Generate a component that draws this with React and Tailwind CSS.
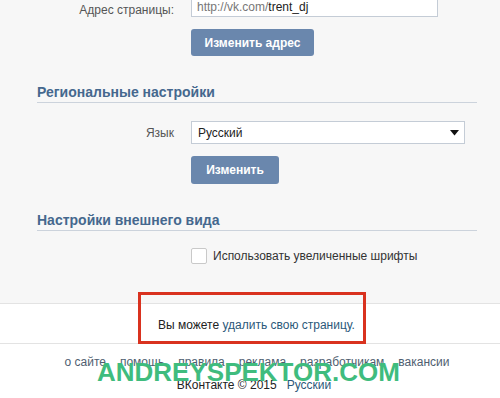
import React from "react";

export default function App() {
  const links = ["о сайте", "помощь", "правила", "реклама", "разработчикам", "вакансии"];
  return (
    <div
      className="relative w-[500px] h-[398px] overflow-hidden bg-white text-[12px] text-[#222]"
      style={{ fontFamily: '"Liberation Sans", Arial, sans-serif' }}
    >
      {/* settings area */}
      <div className="h-[304px] bg-[#f7f7f7] border-b border-[#e3e3e3] flex flex-col">
        <div className="flex items-center mt-[-5px] h-[22px]">
          <div className="w-[174px] text-right text-[#555] pt-[8px]">Адрес страницы:</div>
          <div className="ml-[17px] w-[247px] h-[22px] bg-white border border-[#c4ccd6] flex items-end pb-[3px] pl-[5px] leading-none text-[12px]">
            <span className="text-[#777]">http://vk.com/</span>
            <span className="text-[#222]">trent_dj</span>
          </div>
        </div>
        <div className="ml-[191px] mt-[12px]">
          <button className="w-[123px] h-[27px] rounded-[3px] bg-[#6a87ad] text-white font-bold text-[12px]">
            Изменить адрес
          </button>
        </div>

        <div className="ml-[37px] w-[440px] mt-[27px] border-b border-[#ccd3dc] pb-[1px]">
          <div className="h-[18px] leading-[18px] font-bold text-[14px] text-[#45688e]">Региональные настройки</div>
        </div>

        <div className="flex items-center mt-[18px]">
          <div className="w-[174px] text-right text-[#555]">Язык</div>
          <div className="ml-[17px] w-[274px] h-[23px] bg-white border border-[#c4ccd6] flex items-center justify-between pl-[6px] pr-[5px]">
            <span className="text-[#222] text-[12px]">Русский</span>
            <svg width="9" height="6" viewBox="0 0 9 6">
              <path d="M0 0 H9 L4.5 5.5 Z" fill="#111" />
            </svg>
          </div>
        </div>
        <div className="ml-[191px] mt-[12px]">
          <button className="w-[88px] h-[28px] rounded-[3px] bg-[#6a87ad] text-white font-bold text-[12px]">
            Изменить
          </button>
        </div>

        <div className="ml-[37px] w-[440px] mt-[27px] border-b border-[#ccd3dc] pb-[1px]">
          <div className="h-[18px] leading-[18px] font-bold text-[14px] text-[#45688e]">Настройки внешнего вида</div>
        </div>

        <div className="ml-[191px] mt-[16px] flex items-center">
          <div className="w-[16px] h-[16px] bg-white border border-[#c9c9c9] rounded-[2px]" />
          <span className="ml-[6px] text-[#333]">Использовать увеличенные шрифты</span>
        </div>
      </div>

      {/* delete area */}
      <div className="h-[40px] bg-white border-b border-[#e3e3e3] flex items-center">
        <div className="ml-[158px] mt-[2px]">
          <span className="text-[#222]">Вы можете </span>
          <span className="text-[#2b587a]">удалить свою страницу.</span>
        </div>
      </div>

      {/* footer */}
      <div className="flex flex-col items-center">
        <div className="mt-[10px] flex gap-[14px] text-[#4f5e70] leading-[16px] pl-[14px]">
          {links.map((l) => (
            <span key={l}>{l}</span>
          ))}
        </div>
        <div className="mt-[7px] leading-[16px] pl-[8px]">
          <span className="text-[#222]">ВКонтакте © 2015</span>
          <span className="ml-[10px] text-[#2b587a]">Русский</span>
        </div>
      </div>

      {/* red highlight */}
      <div className="absolute left-[138px] top-[292px] w-[228px] h-[52px] border-[3px] border-[#d9321f]" />

      {/* watermark */}
      <div
        className="absolute left-[97px] top-[359px] text-[26px] leading-none font-bold text-[#3fbc7e]"
        style={{ fontFamily: '"Liberation Sans", Arial, sans-serif' }}
      >
        ANDREYSPEKTOR.COM
      </div>
    </div>
  );
}
